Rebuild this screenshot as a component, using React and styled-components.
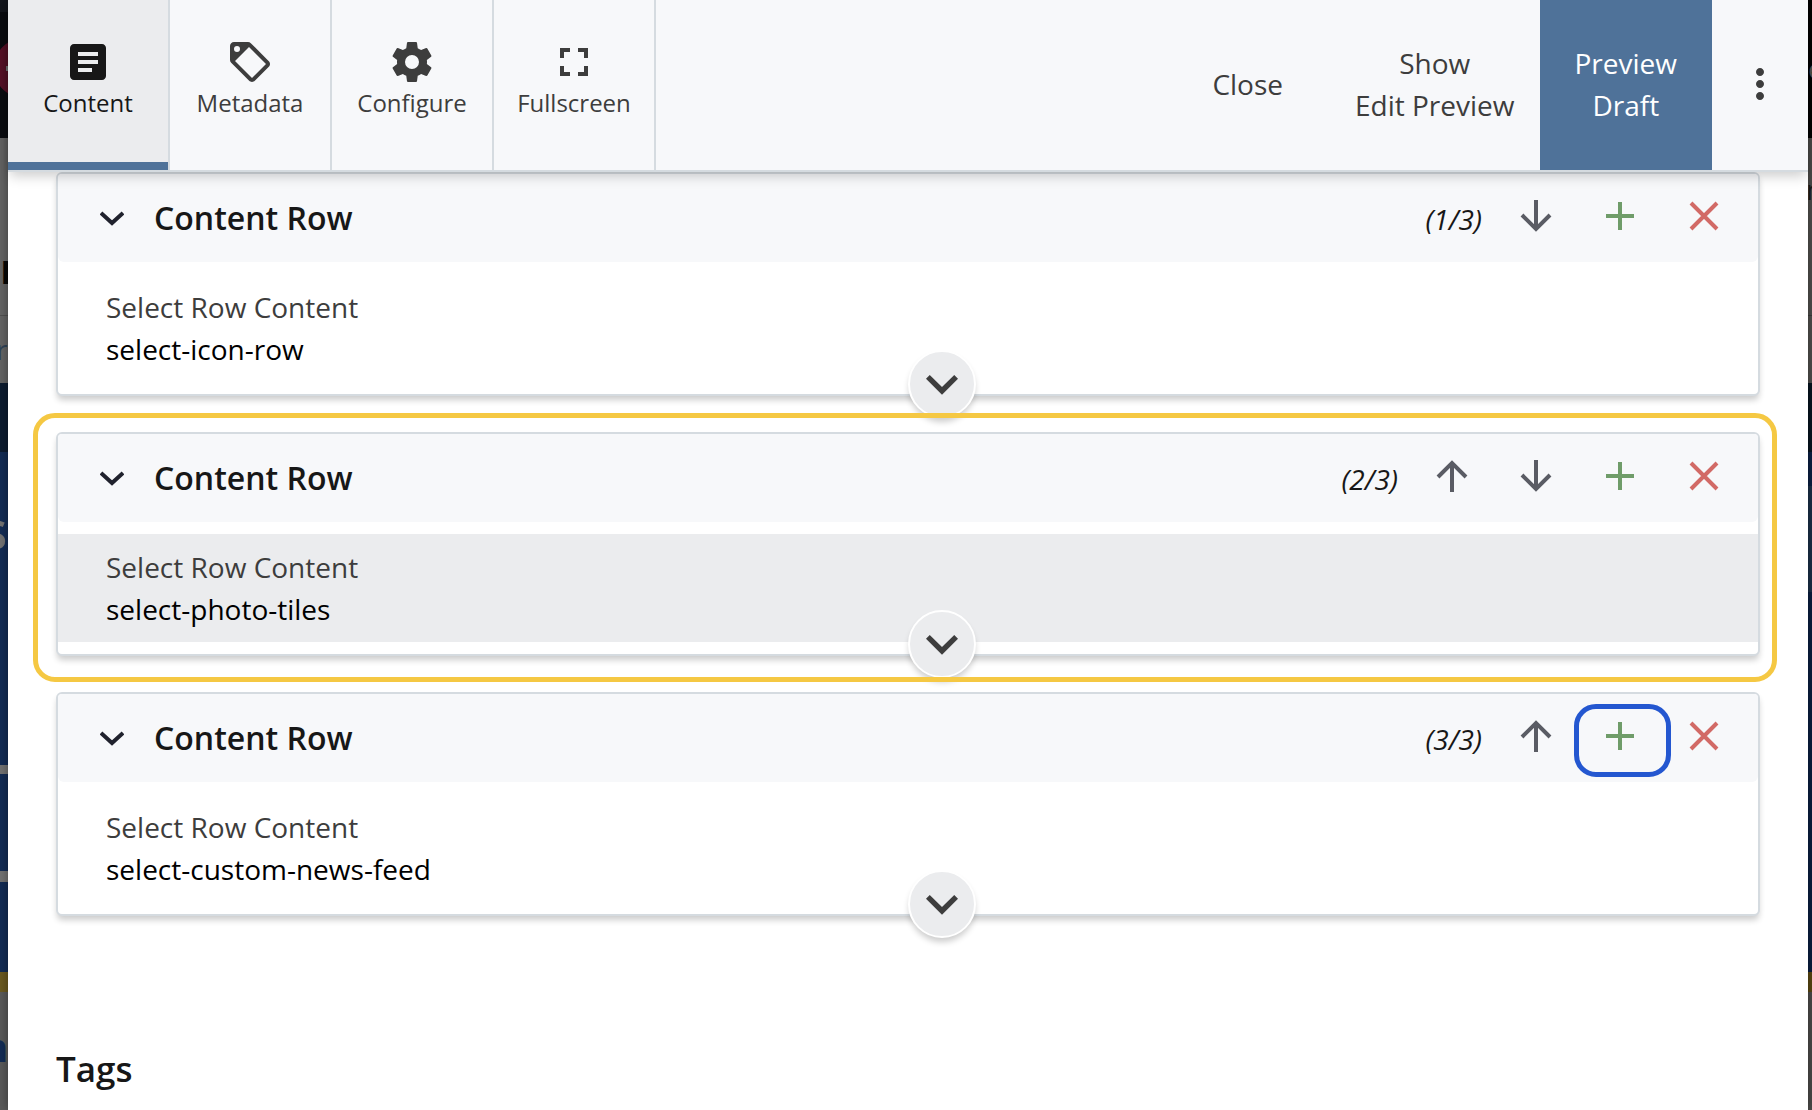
import React from "react";
import styled, { createGlobalStyle } from "styled-components";
import { MdArticle, MdFullscreen, MdMoreVert } from "react-icons/md";

const rows = [
  { id: 1, value: "select-icon-row" },
  { id: 2, value: "select-photo-tiles", hovered: true, outlined: true },
  { id: 3, value: "select-custom-news-feed", outlinedAdd: true },
];

// the dimmed site that shows on both sides of the dialog
const leftBands = [
  { h: 12, color: "#14171d" },
  { h: 126, color: "#0b0d11" },
  { h: 177, color: "#646464" },
  { h: 1, color: "#505050" },
  { h: 67, color: "#646464" },
  { h: 69, color: "#0d1c30" },
  { h: 313, color: "#132c55" },
  { h: 9, color: "#737373" },
  { h: 97, color: "#132c55" },
  { h: 11, color: "#737373" },
  { h: 90, color: "#132c55" },
  { h: 20, color: "#6b5a21" },
];

const rightBands = [
  { h: 138, color: "#000000" },
  { h: 177, color: "#504f4d" },
  { h: 1, color: "#3c3c3c" },
  { h: 67, color: "#504f4d" },
  { h: 69, color: "#06131f" },
  { h: 34, color: "#0b1f43" },
  { h: 106, color: "#1a2f48" },
  { h: 380, color: "#0a1e40" },
  { h: 20, color: "#5a4812" },
];

const leftLetters = [
  { text: "m", size: 42, x: 0, y: 247, color: "#060606", weight: 700 },
  { text: "r", size: 28, x: -4, y: 335, color: "#2f4257", weight: 400 },
  { text: "s", size: 52, x: -18, y: 503, color: "#737373", weight: 600 },
  { text: "n", size: 40, x: -18, y: 1027, color: "#132c55", weight: 700 },
];

const rightLetters = [
  { text: "e", size: 28, x: 0, y: 54, color: "#555555", weight: 400 },
  { text: "n", size: 28, x: -2, y: 175, color: "#1c1c1c", weight: 400 },
];

const TagIcon = () => (
  <svg viewBox="0 0 24 24" width="48" height="48" fill="currentColor" aria-hidden="true">
    <path d="M5.5,7A1.5,1.5 0 0,0 7,5.5A1.5,1.5 0 0,0 5.5,4A1.5,1.5 0 0,0 4,5.5A1.5,1.5 0 0,0 5.5,7M21.41,11.58C21.77,11.94 22,12.44 22,13C22,13.55 21.78,14.05 21.41,14.41L14.41,21.41C14.05,21.77 13.55,22 13,22C12.45,22 11.95,21.77 11.58,21.41L2.59,12.41C2.22,12.05 2,11.55 2,11V4C2,2.89 2.89,2 4,2H11C11.55,2 12.05,2.22 12.41,2.58L21.41,11.58M13,20L20,13L11.5,4.5L4.5,11.5L13,20Z" />
  </svg>
);

const CogIcon = () => (
  <svg viewBox="0 0 24 24" width="48" height="48" fill="currentColor" aria-hidden="true">
    <path d="M12,15.5A3.5,3.5 0 0,1 8.5,12A3.5,3.5 0 0,1 12,8.5A3.5,3.5 0 0,1 15.5,12A3.5,3.5 0 0,1 12,15.5M19.43,12.97C19.47,12.65 19.5,12.33 19.5,12C19.5,11.67 19.47,11.34 19.43,11L21.54,9.37C21.73,9.22 21.78,8.95 21.66,8.73L19.66,5.27C19.54,5.05 19.27,4.96 19.05,5.05L16.56,6.05C16.04,5.66 15.5,5.32 14.87,5.07L14.5,2.42C14.46,2.18 14.25,2 14,2H10C9.75,2 9.54,2.18 9.5,2.42L9.13,5.07C8.5,5.32 7.96,5.66 7.44,6.05L4.95,5.05C4.73,4.96 4.46,5.05 4.34,5.27L2.34,8.73C2.21,8.95 2.27,9.22 2.46,9.37L4.57,11C4.53,11.34 4.5,11.67 4.5,12C4.5,12.33 4.53,12.65 4.57,12.97L2.46,14.63C2.27,14.78 2.21,15.05 2.34,15.27L4.34,18.73C4.46,18.95 4.73,19.03 4.95,18.95L7.44,17.94C7.96,18.34 8.5,18.68 9.13,18.93L9.5,21.58C9.54,21.82 9.75,22 10,22H14C14.25,22 14.46,21.82 14.5,21.58L14.87,18.93C15.5,18.67 16.04,18.34 16.56,17.94L19.05,18.95C19.27,19.03 19.54,18.95 19.66,18.73L21.66,15.27C21.78,15.05 21.73,14.78 21.54,14.63L19.43,12.97Z" />
  </svg>
);

const LineIcon = ({ d, size = 32 }) => (
  <svg viewBox={`0 0 ${size} ${size}`} width={size} height={size} fill="none" stroke="currentColor" strokeWidth="4" aria-hidden="true">
    <path d={d} />
  </svg>
);

const UP = "M16 32V3M2 17L16 3L30 17";
const DOWN = "M16 0V29M2 15L16 29L30 15";
const PLUS = "M16 2V30M2 16H30";
const CROSS = "M3 3L29 29M29 3L3 29";

const tabs = [
  { label: "Content", icon: <MdArticle size={48} />, active: true },
  { label: "Metadata", icon: <TagIcon /> },
  { label: "Configure", icon: <CogIcon /> },
  { label: "Fullscreen", icon: <MdFullscreen size={48} /> },
];

const ContentRow = ({ row, index, total }) => (
  <Card>
    <CardHeader>
      <Toggle aria-label="Collapse row">
        <LineIcon size={24} d="M1 7L12 17L23 7" />
      </Toggle>
      <h2>Content Row</h2>
      <Count>{`(${index + 1}/${total})`}</Count>
      {index > 0 && (
        <Action aria-label="Move up">
          <LineIcon d={UP} />
        </Action>
      )}
      {index < total - 1 && (
        <Action aria-label="Move down">
          <LineIcon d={DOWN} />
        </Action>
      )}
      <Action $color="#6f9c69" aria-label="Add row">
        <LineIcon d={PLUS} />
        {row.outlinedAdd && <AddOutline />}
      </Action>
      <Action $color="#d26a66" aria-label="Remove row">
        <LineIcon d={CROSS} />
      </Action>
    </CardHeader>
    <CardBody>
      <Field $hovered={row.hovered}>
        <span>Select Row Content</span>
        <p>{row.value}</p>
      </Field>
    </CardBody>
    <Expand aria-label="Expand row">
      <svg viewBox="0 0 24 24" width="64" height="64" fill="currentColor" aria-hidden="true">
        <path d="M7.41,8.58L12,13.17L16.59,8.58L18,10L12,16L6,10L7.41,8.58Z" />
      </svg>
    </Expand>
    {row.outlined && <CardOutline />}
  </Card>
);

const Backdrop = ({ width, color, bands, letters, children }) => (
  <Sliver $width={width} $color={color} aria-hidden="true">
    {bands.map((b, i) => (
      <Band key={i} $h={b.h} $color={b.color} />
    ))}
    {children}
    {letters.map((l) => (
      <Letter key={l.y} $size={l.size} $x={l.x} $y={l.y} $color={l.color} $weight={l.weight}>
        {l.text}
      </Letter>
    ))}
  </Sliver>
);

const App = () => {
  return (
    <Page>
      <GlobalStyle />
      <Backdrop width={8} color="#5a5a5a" bands={leftBands} letters={leftLetters}>
        <Badge viewBox="0 0 8 60" width="8" height="60">
          <circle cx="24" cy="30" r="30" fill="#571127" />
          <rect x="6" y="28" width="2" height="5" fill="#777" />
        </Badge>
      </Backdrop>
      <Dialog>
        <Header>
          <Tabs>
            {tabs.map((tab) => (
              <Tab key={tab.label} $active={tab.active}>
                {tab.icon}
                <span>{tab.label}</span>
              </Tab>
            ))}
          </Tabs>
          <HeaderButton>Close</HeaderButton>
          <HeaderButton>
            Show
            <br />
            Edit Preview
          </HeaderButton>
          <HeaderButton $primary>
            Preview
            <br />
            Draft
          </HeaderButton>
          <MoreButton aria-label="More">
            <MdMoreVert size={48} />
          </MoreButton>
        </Header>
        <Content>
          {rows.map((row, i) => (
            <ContentRow key={row.id} row={row} index={i} total={rows.length} />
          ))}
          <SectionTitle>Tags</SectionTitle>
        </Content>
      </Dialog>
      <Backdrop width={4} color="#4c4b49" bands={rightBands} letters={rightLetters} />
    </Page>
  );
};

export default App;

const GlobalStyle = createGlobalStyle`
  * {
    box-sizing: border-box;
  }
  body {
    margin: 0;
    font-family: "Open Sans", "Noto Sans", sans-serif;
    font-size: 28px;
    line-height: 42px;
    color: #3d3d3d;
  }
  button {
    font: inherit;
    color: inherit;
    border: 0;
    padding: 0;
    background: none;
    cursor: pointer;
  }
  svg {
    display: block;
  }
`;

const Page = styled.div`
  display: flex;
  height: 100vh;
  overflow: hidden;
`;

const Sliver = styled.div`
  flex: 0 0 ${({ $width }) => $width}px;
  position: relative;
  overflow: hidden;
  background: ${({ $color }) => $color};
`;

const Band = styled.div`
  height: ${({ $h }) => $h}px;
  background: ${({ $color }) => $color};
`;

const Letter = styled.span`
  position: absolute;
  left: ${({ $x }) => $x}px;
  top: ${({ $y }) => $y}px;
  font-size: ${({ $size }) => $size}px;
  line-height: ${({ $size }) => $size}px;
  font-weight: ${({ $weight }) => $weight};
  color: ${({ $color }) => $color};
`;

const Badge = styled.svg`
  position: absolute;
  left: 0;
  top: 38px;
`;

const Dialog = styled.main`
  flex: 1;
  min-width: 0;
  display: flex;
  flex-direction: column;
  position: relative;
  z-index: 1;
  background: #fff;
  box-shadow: 0 0 10px rgba(0, 0, 0, 0.4);
`;

const Header = styled.header`
  display: flex;
  height: 172px;
  flex-shrink: 0;
  position: relative;
  z-index: 3;
  background: #f7f8fa;
  border-bottom: 2px solid #d5dbe0;
  box-shadow: 0 6px 12px -2px rgba(0, 0, 0, 0.2);
`;

const Tabs = styled.nav`
  display: flex;
  margin-right: auto;
`;

const Tab = styled.button`
  display: flex;
  flex-direction: column;
  align-items: center;
  width: 162px;
  padding-top: 38px;
  font-size: 24px;
  line-height: 34px;
  border-right: 2px solid #d5dbe0;
  color: ${({ $active }) => ($active ? "#171717" : "#3d3d3d")};
  background: ${({ $active }) => ($active ? "#ebecee" : "none")};
  box-shadow: ${({ $active }) => ($active ? "inset 0 -8px #4f7299" : "none")};
`;

const HeaderButton = styled.button`
  padding: 0 ${({ $primary }) => ($primary ? 35 : 25)}px 2px;
  margin-left: ${({ $primary }) => ($primary ? 0 : 22)}px;
  color: ${({ $primary }) => ($primary ? "#fff" : "#3d3d3d")};
  background: ${({ $primary }) => ($primary ? "#4f7299" : "none")};
`;

const MoreButton = styled.button`
  display: flex;
  align-items: center;
  justify-content: center;
  width: 96px;
  padding-bottom: 2px;
`;

const Content = styled.div`
  display: flex;
  flex-direction: column;
  gap: 36px;
  padding: 0 48px;
`;

const Card = styled.section`
  position: relative;
  border: 2px solid #d5dbe0;
  border-radius: 6px;
  background: #fff;
  box-shadow: 0 5px 6px -1px rgba(0, 0, 0, 0.2);
`;

const CardHeader = styled.div`
  display: flex;
  height: 88px;
  padding: 0 12px 0 36px;
  background: #f7f8fa;
  border-radius: 4px 4px 6px 6px;
  h2 {
    margin: 0 auto 0 24px;
    font-size: 32px;
    line-height: 88px;
    font-weight: 600;
    color: #171717;
  }
`;

const Toggle = styled.button`
  display: flex;
  align-items: center;
  justify-content: center;
  width: 36px;
  color: #20222d;
`;

const Count = styled.em`
  margin-right: 12px;
  line-height: 90px;
  color: #171717;
`;

const Action = styled.button`
  display: flex;
  align-items: center;
  justify-content: center;
  position: relative;
  width: 84px;
  height: 84px;
  color: ${({ $color }) => $color || "#5a5c64"};
`;

const AddOutline = styled.span`
  position: absolute;
  inset: 10px -9px 1px -4px;
  border: 5px solid #2457d0;
  border-radius: 22px;
`;

const CardBody = styled.div`
  padding: 12px 0;
`;

const Field = styled.div`
  padding: 12px 48px;
  background: ${({ $hovered }) => ($hovered ? "#ebecee" : "none")};
  p {
    margin: 0;
    color: #000;
  }
`;

const Expand = styled.button`
  position: absolute;
  left: 50%;
  bottom: -24px;
  z-index: 1;
  border: 2px solid #fff;
  border-radius: 50%;
  background: #ebecee;
  box-shadow: 0 5px 6px -1px rgba(0, 0, 0, 0.2);
`;

const CardOutline = styled.div`
  position: absolute;
  inset: -21px -19px -28px -25px;
  z-index: 2;
  border: 5px solid #f5c843;
  border-radius: 22px;
  pointer-events: none;
`;

const SectionTitle = styled.h1`
  margin: 92px 0 0;
  font-size: 35px;
  line-height: 50px;
  font-weight: 600;
  color: #171717;
`;
